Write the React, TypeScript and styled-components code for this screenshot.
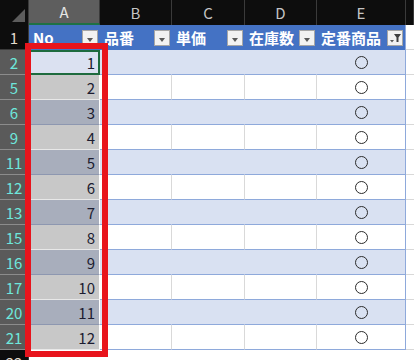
import React from "react";
import styled, { createGlobalStyle, css } from "styled-components";

const GlobalStyle = createGlobalStyle`
  html, body {
    margin: 0;
    padding: 0;
    background: #ffffff;
    overflow: hidden;
  }
  * {
    box-sizing: border-box;
  }
`;

const COLS = "29px 71px 72px 73px 72px 89px 1fr";

const Sheet = styled.div`
  position: relative;
  width: 414px;
  height: 360px;
  overflow: hidden;
  font-family: "Noto Sans CJK JP", "Noto Sans", sans-serif;
  background: #ffffff;
`;

const ColHeaderRow = styled.div`
  display: grid;
  grid-template-columns: ${COLS};
  height: 25px;
  background: #0d0d0d;
`;

const Corner = styled.div`
  position: relative;
  border-right: 1px solid #3a3a3a;
  &::after {
    content: "";
    position: absolute;
    right: 3px;
    bottom: 3px;
    width: 13px;
    height: 13px;
    background: #5c5c5c;
    clip-path: polygon(100% 0, 100% 100%, 0 100%);
  }
`;

const ColLabel = styled.div<{ $selected?: boolean }>`
  display: flex;
  align-items: center;
  justify-content: center;
  font-size: 15px;
  color: #c4c4c4;
  border-right: 1px solid #3a3a3a;
  padding-bottom: 1px;
  ${(p) =>
    p.$selected &&
    css`
      background: #5e5e5e;
      color: #e6e6e6;
      border-bottom: 2px solid #1e7145;
    `}
`;

const Row = styled.div`
  display: grid;
  grid-template-columns: ${COLS};
  height: 25px;
`;

const RowHead = styled.div<{ $filtered?: boolean }>`
  display: flex;
  align-items: center;
  justify-content: center;
  font-size: 15px;
  border-right: 1px solid #3a3a3a;
  background: ${(p) => (p.$filtered ? "#5a5a5a" : "#0d0d0d")};
  color: ${(p) => (p.$filtered ? "#6ee7dc" : "#e4dccd")};
  border-bottom: 1px solid ${(p) => (p.$filtered ? "#8c8c8c" : "#3a3a3a")};
`;

const HeadCell = styled.div<{ $last?: boolean }>`
  display: flex;
  align-items: center;
  justify-content: space-between;
  background: #4472c4;
  color: #ffffff;
  font-size: 15px;
  font-weight: bold;
  padding: 0 2px 0 4px;
  border-right: ${(p) => (p.$last ? "1px solid #8ea9db" : "none")};
`;

const DropButton = styled.span`
  position: relative;
  width: 16px;
  height: 16px;
  background: #f2f2f2;
  border: 1px solid #a6a6a6;
  flex-shrink: 0;
`;

const Arrow = styled.span`
  position: absolute;
  left: 4px;
  top: 7px;
  border-left: 3px solid transparent;
  border-right: 3px solid transparent;
  border-top: 4px solid #595959;
`;

const DataCell = styled.div<{ $band: boolean; $edge?: boolean }>`
  display: flex;
  align-items: center;
  justify-content: center;
  background: ${(p) => (p.$band ? "#d9e1f2" : "#ffffff")};
  border-bottom: 1px solid #8ea9db;
  border-right: 1px solid
    ${(p) => (p.$edge ? "#8ea9db" : p.$band ? "#d9e1f2" : "#d9d9d9")};
`;

const Outside = styled.div`
  border-bottom: 1px solid #d9d9d9;
  background: #ffffff;
`;

const NumCell = styled.div<{ $band: boolean; $active?: boolean }>`
  display: flex;
  align-items: center;
  justify-content: flex-end;
  padding-right: 4px;
  font-size: 15px;
  color: #1c1c30;
  border-right: 1px solid #ffffff;
  border-bottom: 1px solid ${(p) => (p.$band ? "#8d97b0" : "#e8e8e8")};
  background: ${(p) => (p.$band ? "#a8aebc" : "#c8c8c8")};
  ${(p) =>
    p.$active &&
    css`
      background: #dbe1f1;
      border: 2px solid #1e6b3e;
      padding-right: 3px;
    `}
`;

const Circle = styled.span`
  width: 13px;
  height: 13px;
  border-radius: 50%;
  border: 1px solid #2b2b2b;
`;

const Highlight = styled.div`
  position: absolute;
  left: 25px;
  top: 43px;
  width: 83px;
  height: 314px;
  border: 6px solid #e8141c;
  pointer-events: none;
`;

const FilterIcon = () => (
  <svg width="14" height="14" viewBox="0 0 14 14" style={{ position: "absolute", left: 0, top: 0 }}>
    <path d="M2 9 L6 9 L4 11.5 Z" fill="#595959" />
    <path d="M6 3 H13 L10.5 6.5 V11 H8.5 V6.5 Z" fill="#404040" />
  </svg>
);

const columns = ["A", "B", "C", "D", "E"];
const headers = ["No", "品番", "単価", "在庫数", "定番商品"];
const rowNums = [2, 5, 6, 9, 11, 12, 13, 15, 16, 17, 20, 21];

export default function App() {
  return (
    <>
      <GlobalStyle />
      <Sheet>
        <ColHeaderRow>
          <Corner />
          {columns.map((c) => (
            <ColLabel key={c} $selected={c === "A"}>
              {c}
            </ColLabel>
          ))}
          <ColLabel />
        </ColHeaderRow>

        <Row>
          <RowHead>1</RowHead>
          {headers.map((h, i) => (
            <HeadCell key={h} $last={i === headers.length - 1}>
              <span>{h}</span>
              <DropButton>{i === headers.length - 1 ? <FilterIcon /> : <Arrow />}</DropButton>
            </HeadCell>
          ))}
          <Outside />
        </Row>

        {rowNums.map((n, i) => {
          const band = i % 2 === 0;
          return (
            <Row key={n}>
              <RowHead $filtered>{n}</RowHead>
              <NumCell $band={band} $active={i === 0}>
                {i + 1}
              </NumCell>
              <DataCell $band={band} />
              <DataCell $band={band} />
              <DataCell $band={band} />
              <DataCell $band={band} $edge>
                <Circle />
              </DataCell>
              <Outside />
            </Row>
          );
        })}

        <Row>
          <RowHead>22</RowHead>
          <Outside />
          <Outside />
          <Outside />
          <Outside />
          <Outside />
          <Outside />
        </Row>

        <Highlight />
      </Sheet>
    </>
  );
}
